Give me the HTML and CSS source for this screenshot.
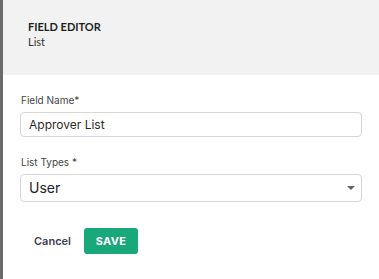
FILE: index.html
```html
<!DOCTYPE html>
<html>
<head>
<meta charset="utf-8">
<link rel="stylesheet" href="styles.css">
</head>
<body>
<div class="panel">
  <div class="header">
    <div class="title">FIELD EDITOR</div>
    <div class="subtitle">List</div>
  </div>
  <div class="form">
    <label class="label">Field Name*</label>
    <div class="input">Approver List</div>
    <label class="label label-2">List Types *</label>
    <div class="select">
      <span>User</span>
      <span class="caret"></span>
    </div>
    <div class="actions">
      <button class="btn-cancel">Cancel</button>
      <button class="btn-save">SAVE</button>
    </div>
  </div>
</div>
</body>
</html>
```
FILE: styles.css
```css
html, body {
  margin: 0;
  padding: 0;
  background: #fff;
}
.panel {
  border-left: 3px solid #6b6b6b;
  min-height: 279px;
  box-sizing: border-box;
}
.header {
  height: 75px;
  box-sizing: border-box;
  background: #f2f2f2;
  padding: 19px 25px 0;
  font-family: Lato, "Liberation Sans", sans-serif;
  font-size: 11px;
  color: #1e1e1e;
}
.title {
  font-weight: 700;
  line-height: 15px;
}
.subtitle {
  line-height: 15px;
  color: #333;
}
.form {
  padding: 18px 17px 0 17px;
  display: flex;
  flex-direction: column;
  font-family: Inter, "Liberation Sans", sans-serif;
}
.label {
  font-size: 10px;
  line-height: 14px;
  color: #444;
  margin: 0 0 5px 1px;
}
.label-2 {
  margin-top: 18px;
}
.input {
  height: 25px;
  box-sizing: border-box;
  border: 1px solid #d6d6de;
  border-radius: 4px;
  padding: 0 8px;
  font-size: 12px;
  line-height: 23px;
  color: #2a2a2a;
}
.select {
  height: 28px;
  box-sizing: border-box;
  border: 1px solid #d6d6de;
  border-radius: 4px;
  padding: 0 6px 0 8px;
  font-size: 14px;
  line-height: 26px;
  color: #222;
  display: flex;
  align-items: center;
  justify-content: space-between;
}
.caret {
  width: 0;
  height: 0;
  border-left: 4px solid transparent;
  border-right: 4px solid transparent;
  border-top: 4px solid #666;
}
.actions {
  margin-top: 26px;
  display: flex;
  align-items: center;
  gap: 13px;
}
.btn-cancel {
  font-family: Inter, "Liberation Sans", sans-serif;
  font-size: 11px;
  font-weight: 600;
  color: #3b4152;
  background: none;
  border: none;
  padding: 0 0 0 14px;
  height: 26px;
  cursor: pointer;
}
.btn-save {
  font-family: Inter, "Liberation Sans", sans-serif;
  font-size: 11px;
  font-weight: 700;
  color: #fff;
  background: #19a87a;
  border: none;
  border-radius: 3px;
  height: 26px;
  width: 54px;
  padding: 0;
  letter-spacing: 0.3px;
  cursor: pointer;
}
```
